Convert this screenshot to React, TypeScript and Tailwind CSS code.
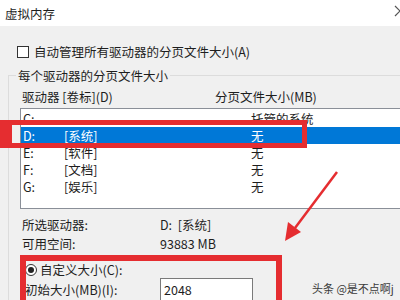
const drives = [
  { letter: 'C:', label: '', size: '托管的系统', selected: false },
  { letter: 'D:', label: '[系统]', size: '无', selected: true },
  { letter: 'E:', label: '[软件]', size: '无', selected: false },
  { letter: 'F:', label: '[文档]', size: '无', selected: false },
  { letter: 'G:', label: '[娱乐]', size: '无', selected: false },
]

export default function App() {
  return (
    <div className="relative w-[400px] h-[300px] overflow-hidden bg-[#f0f0f0] text-[12.5px] leading-[17px] text-[#1e1e1e] font-['Noto_Sans_CJK_SC','Noto_Sans',sans-serif]">
      {/* title bar */}
      <div className="flex items-center h-[26px] pl-[5px] bg-white">
        <span>虚拟内存</span>
      </div>
      <svg className="absolute left-[394px] top-[5px]" width="12" height="12" viewBox="0 0 12 12">
        <path d="M1 1 L11 11 M11 1 L1 11" stroke="#555" strokeWidth="1.2" fill="none" />
      </svg>

      {/* auto manage checkbox */}
      <div className="flex items-center gap-[5px] h-[17px] mt-[17px] pl-[17px]">
        <div className="w-[12px] h-[12px] border border-[#333] bg-white" />
        <span>自动管理所有驱动器的分页文件大小(A)</span>
      </div>

      {/* group box */}
      <div className="relative ml-[8px] mt-[15px] border-t border-l border-[#dcdcdc] pt-[12px]">
        <span className="absolute -top-[9px] left-[7px] px-[2px] bg-[#f0f0f0]">每个驱动器的分页文件大小</span>

        <div className="flex h-[17px] pl-[13px]">
          <span className="w-[193px]">驱动器 [卷标](D)</span>
          <span>分页文件大小(MB)</span>
        </div>

        {/* listbox */}
        <div className="ml-[11px] mt-[3px] w-[400px] h-[101px] pt-[1px] bg-white border border-[#8a8f98]">
          {drives.map((d) => (
            <div
              key={d.letter}
              className={d.selected ? 'flex h-[17px] pl-[2px] bg-[#0078d7] text-white' : 'flex h-[17px] pl-[2px]'}
            >
              <span className="w-[41px]">{d.letter}</span>
              <span className="w-[187px]">{d.label}</span>
              <span>{d.size}</span>
            </div>
          ))}
        </div>

        <div className="flex items-center h-[19px] mt-[6px] pl-[13px]">
          <span className="w-[138px]">所选驱动器:</span>
          <span>D:&nbsp;&nbsp;[系统]</span>
        </div>
        <div className="flex items-center h-[19px] pl-[13px]">
          <span className="w-[138px]">可用空间:</span>
          <span>93883 MB</span>
        </div>

        {/* custom size */}
        <div className="flex items-center gap-[3px] h-[17px] mt-[8px] pl-[16px]">
          <div className="flex items-center justify-center w-[12px] h-[12px] rounded-full border border-[#333] bg-white">
            <div className="w-[6px] h-[6px] rounded-full bg-[#222]" />
          </div>
          <span>自定义大小(C):</span>
        </div>
        <div className="flex items-center h-[23px] pl-[16px]">
          <span className="w-[135px]">初始大小(MB)(I):</span>
          <div className="flex items-center w-[93px] h-[23px] pl-[3px] bg-white border border-[#7a7a7a]">2048</div>
        </div>
      </div>

      {/* annotations */}
      <div className="absolute left-0 top-[120px] w-[307px] h-[28px] border-[5px] border-l-[12px] border-[#e52d30]" />
      <div className="absolute left-[20px] top-[255px] w-[262px] h-[60px] border-[6px] border-[#e52d30]" />
      <svg className="absolute left-0 top-0" width="400" height="300" viewBox="0 0 400 300">
        <line x1="337" y1="172" x2="295" y2="228" stroke="#e52d30" strokeWidth="2.5" />
        <polygon points="285,241 288,222 301,232" fill="#e52d30" />
      </svg>

      <span className="absolute left-[312px] top-[280px] text-[11px] leading-[16px] text-[#3a3a3a]">头条 @是不点啊j</span>
    </div>
  )
}
